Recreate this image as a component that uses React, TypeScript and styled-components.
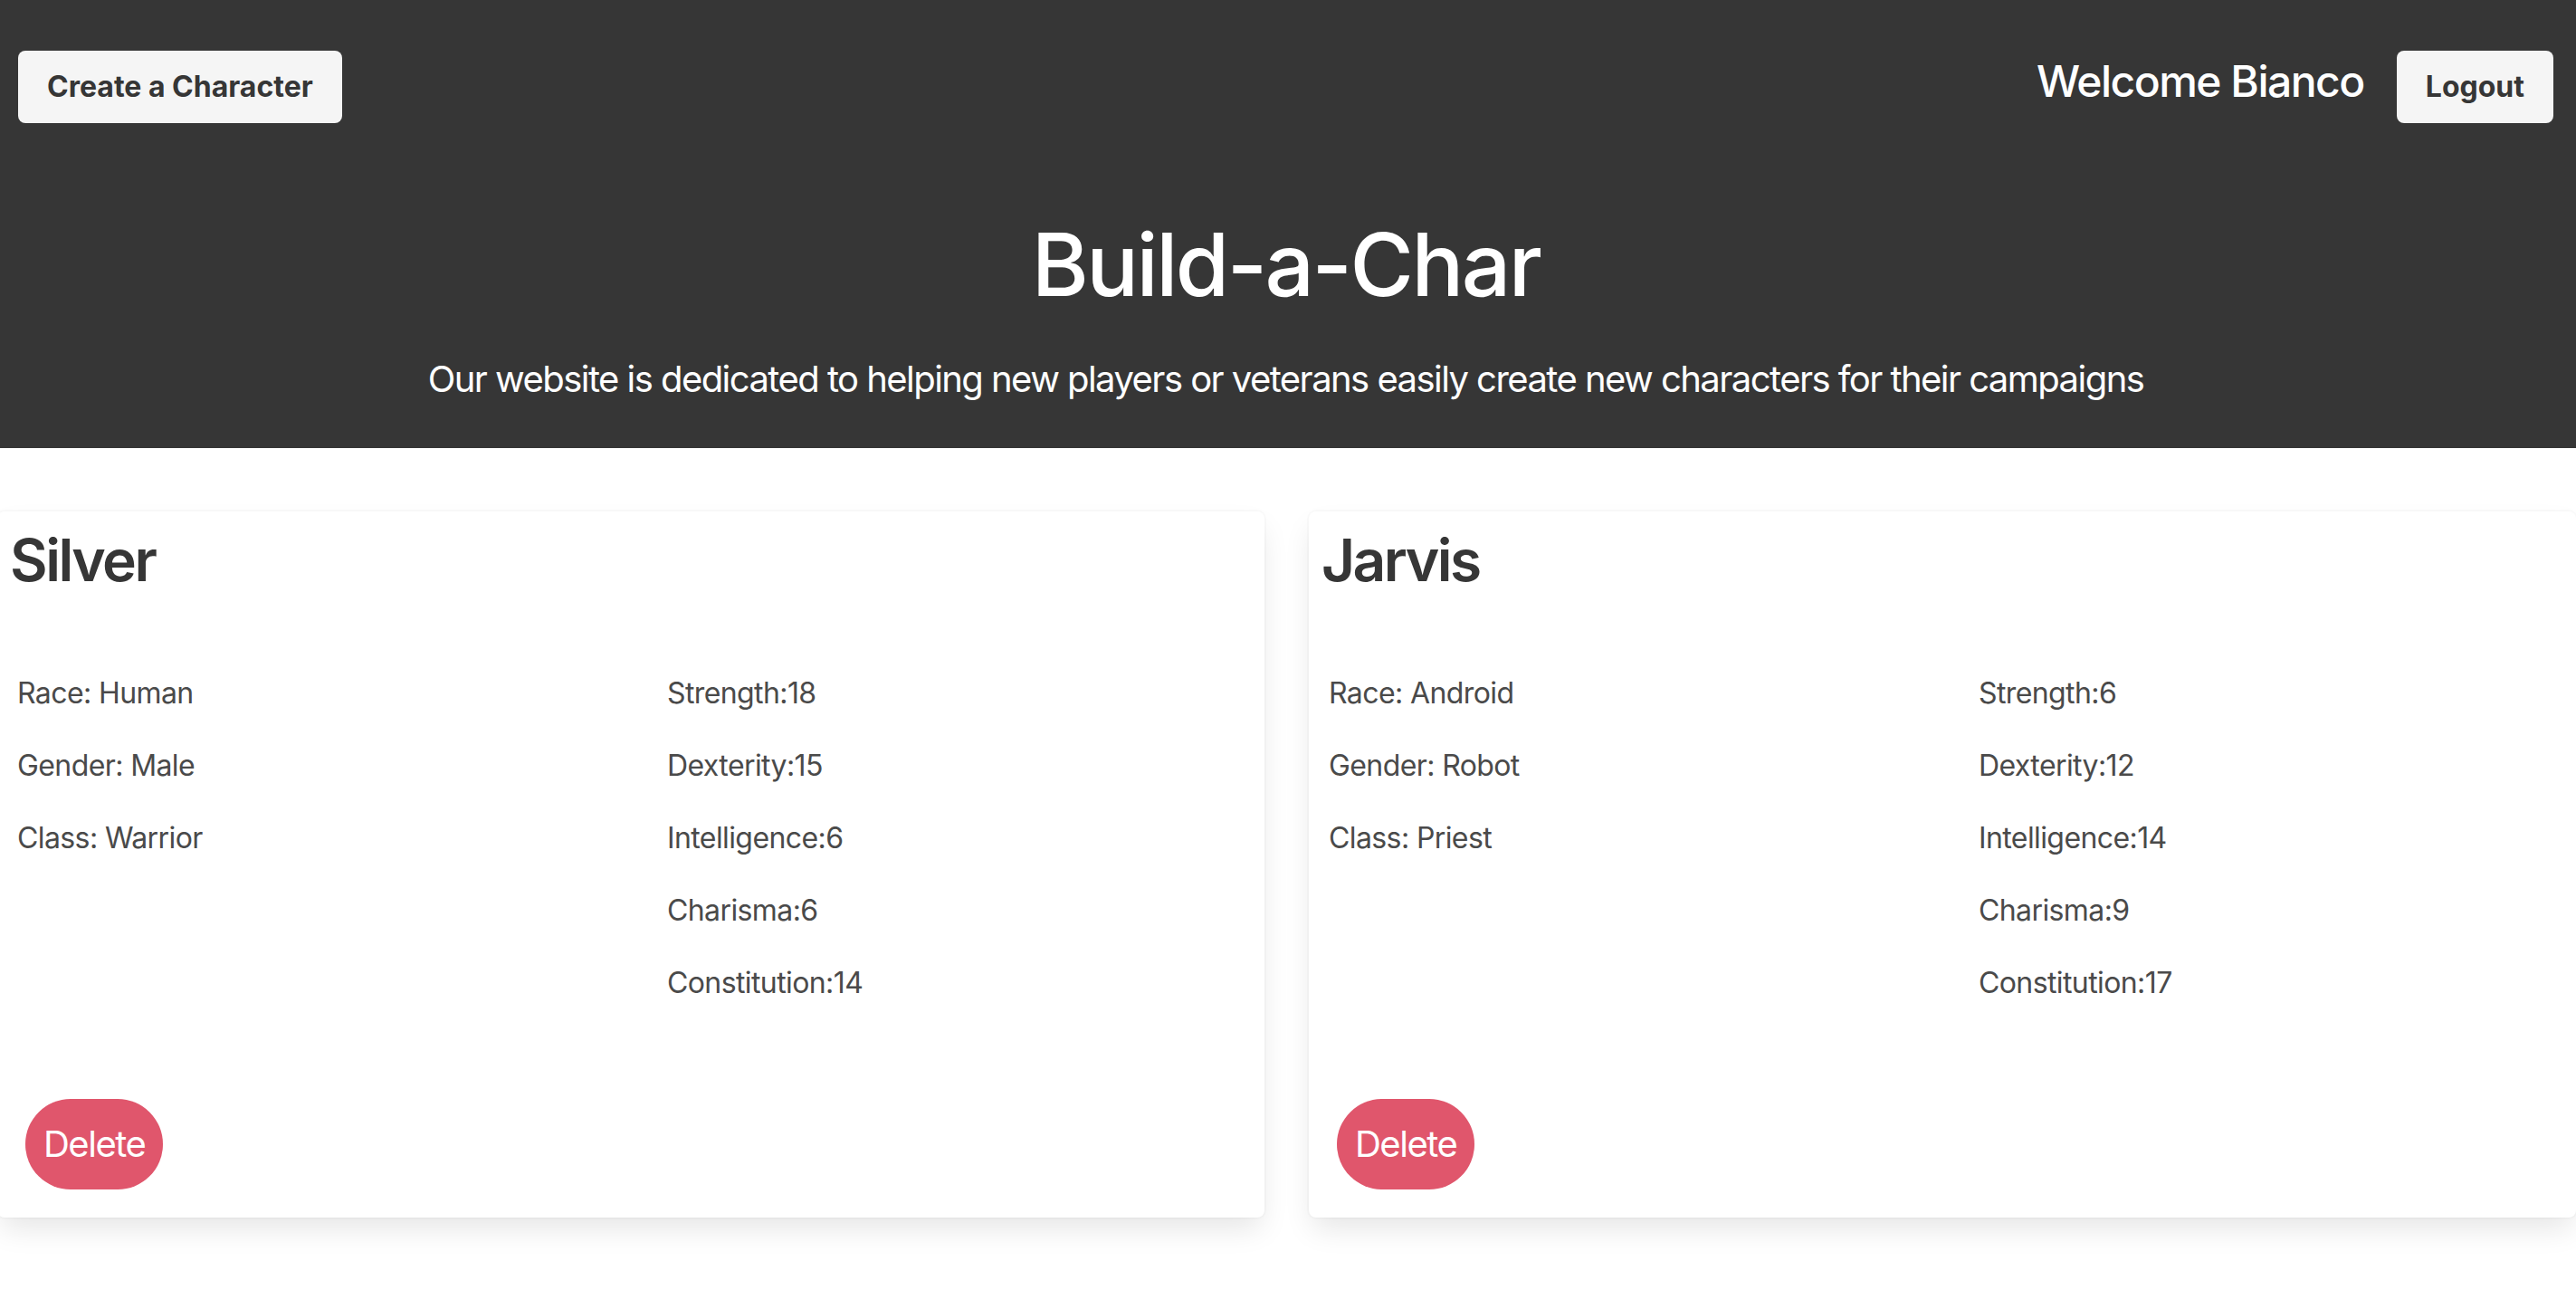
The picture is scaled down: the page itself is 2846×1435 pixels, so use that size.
import styled, { createGlobalStyle } from 'styled-components';

type Character = {
    id: number;
    name: string;
    race: string;
    gender: string;
    charClass: string;
    stats: { label: string; value: number }[];
};

const characters: Character[] = [
    {
        id: 1,
        name: 'Silver',
        race: 'Human',
        gender: 'Male',
        charClass: 'Warrior',
        stats: [
            { label: 'Strength', value: 18 },
            { label: 'Dexterity', value: 15 },
            { label: 'Intelligence', value: 6 },
            { label: 'Charisma', value: 6 },
            { label: 'Constitution', value: 14 },
        ],
    },
    {
        id: 2,
        name: 'Jarvis',
        race: 'Android',
        gender: 'Robot',
        charClass: 'Priest',
        stats: [
            { label: 'Strength', value: 6 },
            { label: 'Dexterity', value: 12 },
            { label: 'Intelligence', value: 14 },
            { label: 'Charisma', value: 9 },
            { label: 'Constitution', value: 17 },
        ],
    },
];

const App = () => {
    const cards = characters.map((character) => {
        const { id, name, race, gender, charClass, stats } = character;

        return (
            <Card key={id}>
                <CardTitle>{name}</CardTitle>
                <InfoGrid>
                    <InfoColumn>
                        <InfoLine>Race: {race}</InfoLine>
                        <InfoLine>Gender: {gender}</InfoLine>
                        <InfoLine>Class: {charClass}</InfoLine>
                    </InfoColumn>
                    <InfoColumn>
                        {stats.map((stat) => (
                            <InfoLine key={stat.label}>
                                {stat.label}:{stat.value}
                            </InfoLine>
                        ))}
                    </InfoColumn>
                </InfoGrid>
                <DeleteButton type='button'>Delete</DeleteButton>
            </Card>
        );
    });

    return (
        <>
            <GlobalStyle />
            <Hero>
                <NavBar>
                    <LightButton type='button'>Create a Character</LightButton>
                    <UserArea>
                        <Welcome>Welcome Bianco</Welcome>
                        <LightButton type='button'>Logout</LightButton>
                    </UserArea>
                </NavBar>
                <HeroTitle>Build-a-Char</HeroTitle>
                <HeroSubtitle>
                    Our website is dedicated to helping new players or veterans
                    easily create new characters for their campaigns
                </HeroSubtitle>
            </Hero>
            <CardsGrid>{cards}</CardsGrid>
        </>
    );
};

export default App;

const GlobalStyle = createGlobalStyle`
    * {
        box-sizing: border-box;
    }

    html,
    body {
        margin: 0;
        padding: 0;
        background: #ffffff;
        overflow-x: hidden;
    }

    body {
        font-family: Inter, 'Noto Sans', 'Liberation Sans', sans-serif;
        color: #4a4a4a;
    }
`;

const Hero = styled.header`
    background-color: #363636;
    padding: 56px 25px 51px 20px;
    display: flex;
    flex-direction: column;
    align-items: center;
`;

const NavBar = styled.nav`
    width: 100%;
    display: flex;
    justify-content: space-between;
    align-items: flex-start;
`;

const UserArea = styled.div`
    display: flex;
    align-items: flex-start;
    gap: 36px;
`;

const LightButton = styled.button`
    height: 80px;
    padding: 0 30px;
    border: 2px solid transparent;
    border-radius: 8px;
    background-color: #f5f5f5;
    color: #363636;
    font-family: inherit;
    font-size: 32px;
    font-weight: 700;
    line-height: 1;
    cursor: pointer;
`;

const Welcome = styled.span`
    margin-top: 10px;
    color: #ffffff;
    font-size: 48px;
    font-weight: 500;
    line-height: 48px;
    letter-spacing: -1.5px;
`;

const HeroTitle = styled.h1`
    margin: 102px 0 0;
    color: #ffffff;
    font-size: 96px;
    font-weight: 500;
    line-height: 108px;
    letter-spacing: -2.5px;
`;

const HeroSubtitle = styled.p`
    margin: 48px 0 0;
    color: #ffffff;
    font-size: 40px;
    font-weight: 400;
    line-height: 50px;
    letter-spacing: -1.55px;
`;

const CardsGrid = styled.main`
    display: grid;
    grid-template-columns: 1400px 1400px;
    column-gap: 49px;
    margin: 70px 0 80px -3px;
`;

const Card = styled.section`
    display: flex;
    flex-direction: column;
    align-items: flex-start;
    padding: 18px 24px 31px 14px;
    background-color: #ffffff;
    border-radius: 8px;
    box-shadow: 0 16px 32px -4px rgba(10, 10, 10, 0.1),
        0 0 0 2px rgba(10, 10, 10, 0.02);
`;

const CardTitle = styled.h2`
    margin: 0;
    color: #363636;
    font-size: 64px;
    font-weight: 600;
    line-height: 72px;
    letter-spacing: -2.5px;
`;

const InfoGrid = styled.div`
    width: 100%;
    display: grid;
    grid-template-columns: 718px 1fr;
    margin-top: 87px;
    padding-left: 8px;
`;

const InfoColumn = styled.div`
    display: flex;
    flex-direction: column;
    gap: 32px;
`;

const InfoLine = styled.p`
    margin: 0;
    color: #4a4a4a;
    font-size: 32px;
    line-height: 48px;
    letter-spacing: -0.6px;
`;

const DeleteButton = styled.button`
    height: 100px;
    margin: 104px 0 0 17px;
    padding: 0 20px;
    border: none;
    border-radius: 9999px;
    background-color: #e0566c;
    color: #ffffff;
    font-family: inherit;
    font-size: 40px;
    font-weight: 400;
    line-height: 1;
    letter-spacing: -1.5px;
    cursor: pointer;
`;
